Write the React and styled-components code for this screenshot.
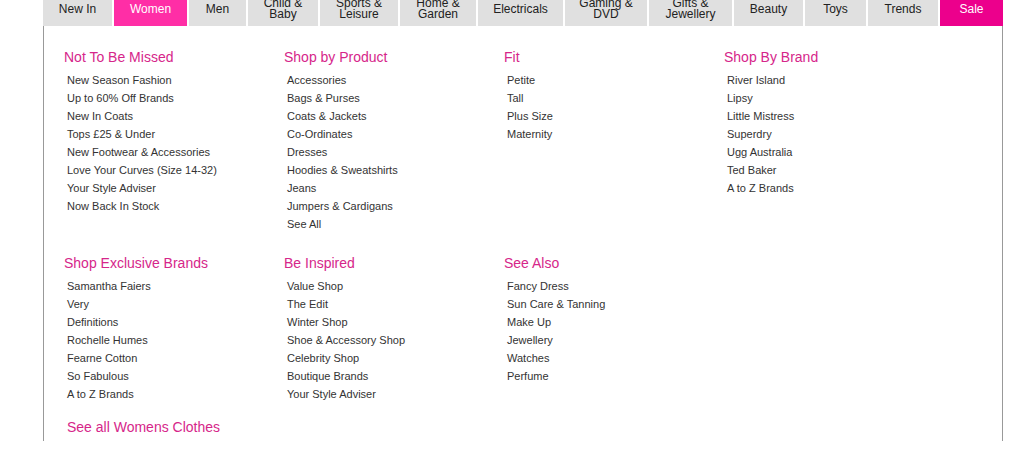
import styled, { createGlobalStyle } from "styled-components";

const GlobalStyle = createGlobalStyle`
  body {
    margin: 0;
    background: #fff;
    font-family: Arial, "Liberation Sans", sans-serif;
    overflow: hidden;
  }
`

const Wrapper = styled.div`
  width: 960px;
  margin-left: 43px;
`

const TabBar = styled.nav`
  display: flex;
  gap: 2px;
  height: 34px;
  margin-top: -8px;
`

const Tab = styled.a`
  display: flex;
  align-items: center;
  justify-content: center;
  flex: 0 0 ${(p) => p.$w}px;
  background: ${(p) => p.$bg || "#e0e0e0"};
  color: ${(p) => (p.$bg ? "#fff" : "#222")};
  font-size: 12px;
  line-height: 11px;
  text-align: center;
  text-decoration: none;
  white-space: pre-line;
`

const Panel = styled.section`
  border-left: 1px solid #999;
  border-right: 1px solid #999;
  padding: 22px 20px 5px;
`

const Grid = styled.div`
  display: grid;
  grid-template-columns: repeat(4, 220px);
  row-gap: 21px;
`

const Column = styled.div`
  display: flex;
  flex-direction: column;
`

const Heading = styled.h3`
  margin: 0 0 5px;
  font-size: 14px;
  font-weight: normal;
  line-height: 18px;
  color: #d6268a;
`

const LinkList = styled.ul`
  list-style: none;
  margin: 0;
  padding: 0 0 0 3px;
`

const Item = styled.li`
  font-size: 11px;
  line-height: 18px;
  color: #333;
`

const SeeAll = styled.a`
  display: block;
  margin-top: 15px;
  padding-left: 3px;
  font-size: 14px;
  line-height: 18px;
  color: #d6268a;
  text-decoration: none;
`

const tabs = [
  { label: "New In", w: 69 },
  { label: "Women", w: 73, bg: "#ff2ea6" },
  { label: "Men", w: 57 },
  { label: "Child &\nBaby", w: 70 },
  { label: "Sports &\nLeisure", w: 78 },
  { label: "Home &\nGarden", w: 76 },
  { label: "Electricals", w: 85 },
  { label: "Gaming &\nDVD", w: 82 },
  { label: "Gifts &\nJewellery", w: 83 },
  { label: "Beauty", w: 69 },
  { label: "Toys", w: 61 },
  { label: "Trends", w: 70 },
  { label: "Sale", w: 63, bg: "#ec008c" },
]

const sections = [
  {
    title: "Not To Be Missed",
    links: ["New Season Fashion", "Up to 60% Off Brands", "New In Coats", "Tops £25 & Under", "New Footwear & Accessories", "Love Your Curves (Size 14-32)", "Your Style Adviser", "Now Back In Stock"],
  },
  {
    title: "Shop by Product",
    links: ["Accessories", "Bags & Purses", "Coats & Jackets", "Co-Ordinates", "Dresses", "Hoodies & Sweatshirts", "Jeans", "Jumpers & Cardigans", "See All"],
  },
  {
    title: "Fit",
    links: ["Petite", "Tall", "Plus Size", "Maternity"],
  },
  {
    title: "Shop By Brand",
    links: ["River Island", "Lipsy", "Little Mistress", "Superdry", "Ugg Australia", "Ted Baker", "A to Z Brands"],
  },
  {
    title: "Shop Exclusive Brands",
    links: ["Samantha Faiers", "Very", "Definitions", "Rochelle Humes", "Fearne Cotton", "So Fabulous", "A to Z Brands"],
  },
  {
    title: "Be Inspired",
    links: ["Value Shop", "The Edit", "Winter Shop", "Shoe & Accessory Shop", "Celebrity Shop", "Boutique Brands", "Your Style Adviser"],
  },
  {
    title: "See Also",
    links: ["Fancy Dress", "Sun Care & Tanning", "Make Up", "Jewellery", "Watches", "Perfume"],
  },
]

export default function App() {
  return (
    <>
      <GlobalStyle />
      <Wrapper>
        <TabBar>
          {tabs.map((t) => (
            <Tab key={t.label} $w={t.w} $bg={t.bg}>{t.label}</Tab>
          ))}
        </TabBar>
        <Panel>
          <Grid>
            {sections.map((s) => (
              <Column key={s.title}>
                <Heading>{s.title}</Heading>
                <LinkList>
                  {s.links.map((l) => (
                    <Item key={l}>{l}</Item>
                  ))}
                </LinkList>
              </Column>
            ))}
          </Grid>
          <SeeAll>See all Womens Clothes</SeeAll>
        </Panel>
      </Wrapper>
    </>
  )
}
